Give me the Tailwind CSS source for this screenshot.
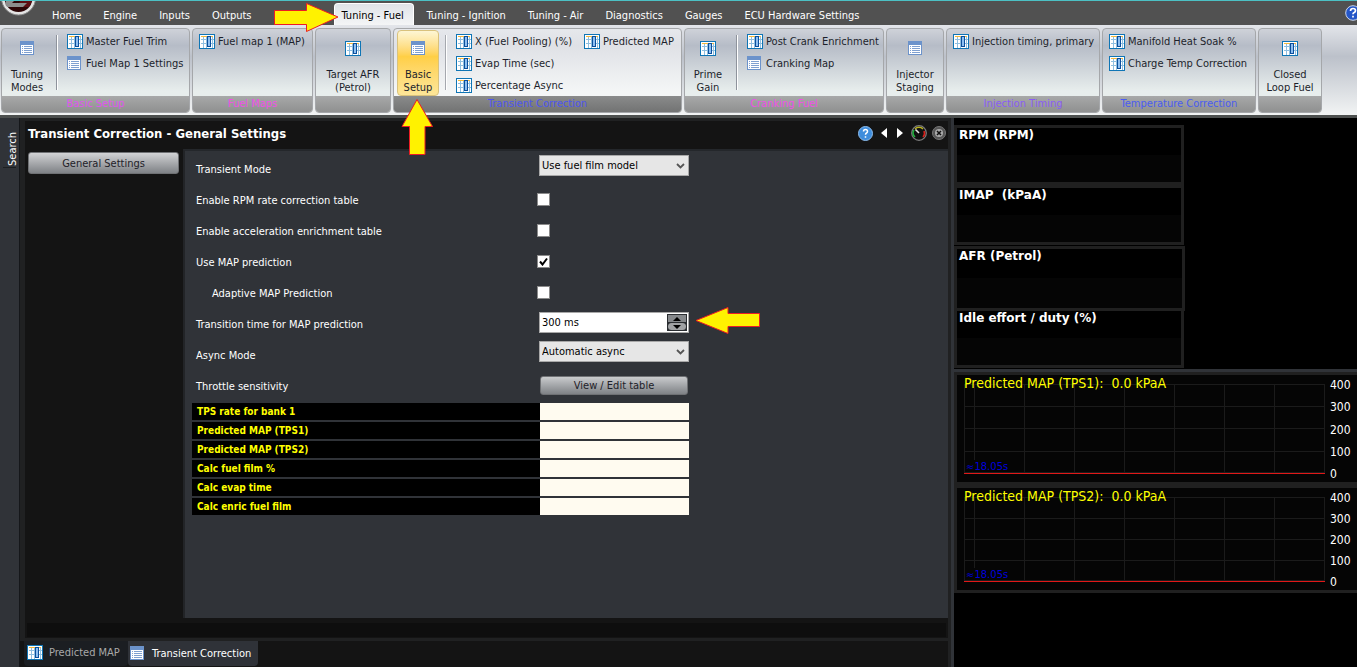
<!DOCTYPE html>
<html lang="en">
<head>
  <meta charset="UTF-8">
  <meta name="viewport" content="width=device-width, initial-scale=1.0">
  <title>Transient Correction - General Settings</title>
  <script src="https://cdn.jsdelivr.net/npm/@tailwindcss/browser@4"></script>
</head>
<body class="h-screen overflow-hidden flex flex-col bg-black font-['DejaVu_Sans_Condensed','DejaVu_Sans',sans-serif] text-[11px] leading-[13px] text-white">

  <!-- shared icons -->
  <svg class="hidden">
    <symbol id="icon-table" viewBox="0 0 16 15">
      <rect x="0.5" y="0.5" width="15" height="14" fill="#fff" stroke="#0f75b5"/>
      <path d="M2 2.500h12" stroke="#f5b93c"/>
      <path d="M2 5.500h6M2 9.500h6M12 5.500h3M12 9.500h3M4.500 3v11M7.500 3v11M13.500 3v11" stroke="#8fbfe0"/>
      <rect x="8.500" y="2.500" width="3" height="10" fill="#8ebff0" stroke="#0b4f9c"/>
    </symbol>
    <symbol id="icon-list" viewBox="0 0 14 14">
      <rect width="14" height="14" fill="#6c93cb"/>
      <rect x="1" y="4" width="12" height="9" fill="#fff"/>
      <path d="M2 5.500h1M4 5.500h8M2 7.500h1M4 7.500h8M2 9.500h1M4 9.500h8M2 11.500h1M4 11.500h8" stroke="#7fa0d0"/>
    </symbol>
  </svg>

  <!-- menu tabs -->
  <header class="relative h-[25px] shrink-0 border-t border-[#4cc0c4] bg-[#515151]">
    <svg class="absolute left-0 top-0 w-[37px] h-[16px]" viewBox="0 0 37 16">
      <circle cx="18.500" cy="-3" r="17" fill="#e4e4e4" stroke="#8a8a8a"/>
      <circle cx="18.500" cy="-3" r="14" fill="#2c0507"/>
      <path d="M20 0h12l-3 6H18z" fill="#5d0d12"/>
      <path d="M6 0h8l-2 2h15l-4 4H8q-4-1-2-6z" fill="#8c8c8c"/>
    </svg>
    <nav class="flex h-full pl-[41px] pt-0.5 whitespace-nowrap [&>a]:px-[11px] [&>a]:pt-[6px]">
      <a href="#">Home</a>
      <a href="#">Engine</a>
      <a href="#">Inputs</a>
      <a href="#">Outputs</a>
      <a href="#" class="w-[71px]">Functions</a>
      <a href="#" class="w-20 !px-[7px] mr-0.5 rounded-t border border-b-0 border-white bg-linear-to-b from-[#dfe3e8] to-[#f4f5f6] text-black !pt-[5px]">Tuning - Fuel</a>
      <a href="#">Tuning - Ignition</a>
      <a href="#">Tuning - Air</a>
      <a href="#">Diagnostics</a>
      <a href="#">Gauges</a>
      <a href="#">ECU Hardware Settings</a>
    </nav>
    <button aria-label="Help" class="absolute -right-1 top-[4px] size-4">
      <svg class="size-4" viewBox="0 0 16 16"><circle cx="8" cy="8" r="7.300" fill="#2456c8" stroke="#c9d6ee"/><path d="M5.500 6q0-2.500 2.500-2.500t2.500 2.200q0 1.200-1.300 1.800T8 9.300M8 10.800v1.700" fill="none" stroke="#fff" stroke-width="1.700"/></svg>
    </button>
  </header>

  <!-- ribbon -->
  <section class="h-[93px] shrink-0 flex gap-0.5 px-px pt-[3px] pb-0.5 border-b-3 border-[#4d504f] bg-linear-to-b from-[#e3e5ea] via-[#bcc1ca] via-35% to-[#f2f4f4] text-[#1c1f2b] whitespace-nowrap
    [&>div]:shrink-0 [&>div]:flex [&>div]:flex-col [&>div]:rounded [&>div]:border [&>div]:border-[#a5a7aa] [&>div]:overflow-hidden [&>div]:bg-linear-to-b [&>div]:from-[#cfd2d9] [&>div]:via-[#b6bcc7] [&>div]:via-20% [&>div]:to-[#e8eeed] [&>div]:to-75%
    [&_footer]:h-[16px] [&_footer]:text-center [&_footer]:leading-[16px] [&_footer]:bg-linear-to-b [&_footer]:from-[#a8a9a9] [&_footer]:to-[#8f9090]">
    <div class="w-[189px]">
      <div class="flex-1 flex">
        <button class="w-[50px] flex flex-col items-center justify-start pt-3"><svg class="size-[14px] mb-[13px]"><use href="#icon-list"/></svg>Tuning<br>Modes</button>
        <div class="w-px my-[6px] ml-1 bg-white border-l border-[#8e939c] box-content"></div>
        <div class="pl-[9px] pt-1 flex flex-col gap-[6px]">
          <button class="flex items-center gap-[3px] h-4"><svg class="w-4 h-[15px]"><use href="#icon-table"/></svg>Master Fuel Trim</button>
          <button class="flex items-center gap-[5px] h-4"><svg class="size-[14px]"><use href="#icon-list"/></svg>Fuel Map 1 Settings</button>
        </div>
      </div>
      <footer class="text-[#e055f0]">Basic Setup</footer>
    </div>
    <div class="w-[121px]">
      <div class="flex-1 pl-[6px] pt-1">
        <button class="flex items-center gap-[3px] h-4"><svg class="w-4 h-[15px]"><use href="#icon-table"/></svg>Fuel map 1 (MAP)</button>
      </div>
      <footer class="text-[#f050e8]">Fuel Maps</footer>
    </div>
    <div class="w-[76px]">
      <button class="flex-1 flex flex-col items-center justify-start pt-3"><svg class="w-4 h-[15px] mb-[12px]"><use href="#icon-table"/></svg>Target AFR<br>(Petrol)</button>
      <footer></footer>
    </div>
    <div class="w-[289px] !from-[#e6e8ec] !via-[#dfe1e6] !to-[#f4f6f6]">
      <div class="flex-1 flex">
        <button class="w-[42px] h-[66px] ml-[3px] mt-px flex flex-col items-center justify-start pt-[10px] rounded-sm border border-[#d9c27c] bg-linear-to-b from-[#fdf6d4] from-0% via-[#ffcf45] via-40% to-[#fde698]"><svg class="size-[14px] mb-[13px]"><use href="#icon-list"/></svg>Basic<br>Setup</button>
        <div class="w-px my-[6px] ml-[6px] bg-white border-l border-[#a5a8ae] box-content"></div>
        <div class="pl-[9px] pt-1 grid grid-cols-[auto_auto] auto-rows-[16px] gap-x-3 gap-y-[6px] content-start">
          <button class="flex items-center gap-[3px]"><svg class="w-4 h-[15px]"><use href="#icon-table"/></svg>X (Fuel Pooling) (%)</button>
          <button class="flex items-center gap-[3px]"><svg class="w-4 h-[15px]"><use href="#icon-table"/></svg>Predicted MAP</button>
          <button class="flex items-center gap-[3px] col-span-2"><svg class="w-4 h-[15px]"><use href="#icon-table"/></svg>Evap Time (sec)</button>
          <button class="flex items-center gap-[3px] col-span-2"><svg class="w-4 h-[15px]"><use href="#icon-table"/></svg>Percentage Async</button>
        </div>
      </div>
      <footer class="!from-[#8a8b8b] !to-[#727373] text-[#4d55f0]">Transient Correction</footer>
    </div>
    <div class="w-[200px]">
      <div class="flex-1 flex">
        <button class="w-[46px] flex flex-col items-center justify-start pt-3"><svg class="w-4 h-[15px] mb-[12px]"><use href="#icon-table"/></svg>Prime<br>Gain</button>
        <div class="w-px my-[6px] ml-[5px] bg-white border-l border-[#8e939c] box-content"></div>
        <div class="pl-[9px] pt-1 flex flex-col gap-[6px]">
          <button class="flex items-center gap-[3px] h-4"><svg class="w-4 h-[15px]"><use href="#icon-table"/></svg>Post Crank Enrichment</button>
          <button class="flex items-center gap-[5px] h-4"><svg class="size-[14px]"><use href="#icon-list"/></svg>Cranking Map</button>
        </div>
      </div>
      <footer class="text-[#f050e8]">Cranking Fuel</footer>
    </div>
    <div class="w-[58px]">
      <button class="flex-1 flex flex-col items-center justify-start pt-3"><svg class="size-[14px] mb-[13px]"><use href="#icon-list"/></svg>Injector<br>Staging</button>
      <footer></footer>
    </div>
    <div class="w-[154px]">
      <div class="flex-1 pl-[6px] pt-1">
        <button class="flex items-center gap-[3px] h-4"><svg class="w-4 h-[15px]"><use href="#icon-table"/></svg>Injection timing, primary</button>
      </div>
      <footer class="text-[#8a5cf5]">Injection Timing</footer>
    </div>
    <div class="w-[154px]">
      <div class="flex-1 pl-[6px] pt-1 flex flex-col gap-[6px]">
        <button class="flex items-center gap-[3px] h-4"><svg class="w-4 h-[15px]"><use href="#icon-table"/></svg>Manifold Heat Soak %</button>
        <button class="flex items-center gap-[3px] h-4"><svg class="w-4 h-[15px]"><use href="#icon-table"/></svg>Charge Temp Correction</button>
      </div>
      <footer class="text-[#4a5cf0]">Temperature Correction</footer>
    </div>
    <div class="w-[64px]">
      <button class="flex-1 flex flex-col items-center justify-start pt-3"><svg class="w-4 h-[15px] mb-[12px]"><use href="#icon-table"/></svg>Closed<br>Loop Fuel</button>
      <footer></footer>
    </div>
  </section>

  <main class="flex-1 min-h-0 flex">
    <aside class="w-5 shrink-0 bg-[#303338] border-r border-[#15171a] pt-[13px]">
      <button class="w-full h-9 flex items-center justify-center pl-[5px]"><span class="[writing-mode:vertical-rl] rotate-180">Search</span></button>
      <div class="mx-[3px] h-px bg-[#1c1f22]"></div>
    </aside>

    <div class="flex-1 min-w-0 flex flex-col bg-[#141414]">
      <div class="flex-1 min-h-0 flex flex-col border-l-5 border-t-3 border-[#202122] bg-[#141414]">
        <div class="h-[28px] shrink-0 flex items-center pl-[3px] pr-0.5">
          <h1 class="flex-1 text-[13px] font-bold leading-4 pb-[3px]">Transient Correction - General Settings</h1>
          <div class="flex items-center pb-1">
            <button aria-label="Help" class="mr-[8px]">
              <svg class="size-[15px]" viewBox="0 0 15 15"><circle cx="7.500" cy="7.500" r="7" fill="#3f8ddc" stroke="#8dbcec"/><path d="M5.500 5.500q0-2 2-2t2 2q0 1-1 1.500t-1 1.800M7.500 10.300v1.500" fill="none" stroke="#fff" stroke-width="1.500"/></svg>
            </button>
            <button aria-label="Previous" class="mr-[10px]"><svg class="w-[6px] h-[10px]" viewBox="0 0 6 10"><path d="M6 0v10L0 5z" fill="#fff"/></svg></button>
            <button aria-label="Next" class="mr-[8px]"><svg class="w-[6px] h-[10px]" viewBox="0 0 6 10"><path d="M0 0v10l6-5z" fill="#fff"/></svg></button>
            <button aria-label="Gauges" class="mr-[5px]">
              <svg class="size-4" viewBox="0 0 16 16"><circle cx="8" cy="8" r="7.300" fill="#111" stroke="#7c7c7c" stroke-width="1.300"/><g fill="none" stroke-width="1.600"><path d="M4 12a5.500 5.500 0 0 1-1-7" stroke="#1fae3c"/><path d="M4 4a5.500 5.500 0 0 1 8 0" stroke="#b9b320"/><path d="M13 6a5.500 5.500 0 0 1-1 6" stroke="#d8201a"/><path d="M4.500 4.500L8 8" stroke="#e8e8e8"/></g></svg>
            </button>
            <button aria-label="Close">
              <svg class="size-[14px]" viewBox="0 0 14 14"><circle cx="7" cy="7" r="6.500" fill="#555" stroke="#777"/><circle cx="7" cy="7" r="4" fill="#aaa"/><path d="M5 5l4 4M9 5l-4 4" stroke="#111" stroke-width="1.500"/></svg>
            </button>
          </div>
        </div>

        <div class="flex-1 min-h-0 flex">
          <div class="w-[158px] shrink-0 pl-[3px] pr-1 pt-[3px]">
            <button class="w-full h-[22px] rounded-[3px] border border-[#6f7174] bg-linear-to-b from-[#d2d3d5] to-[#7f8286] text-[#1e2128]">General Settings</button>
          </div>

          <form class="flex-1 bg-[#303338] border-t-2 border-l-2 border-l-[#222427] border-t-[#24272b] pl-[7px] pt-[2px]">
            <div class="grid grid-cols-[343px_150px] auto-rows-[31px] items-center pl-1 [&_label]:pt-0.5 [&_input[type=checkbox]]:appearance-none [&_input[type=checkbox]]:-ml-0.5 [&_input[type=checkbox]]:size-[13px] [&_input[type=checkbox]]:bg-white [&_input[type=checkbox]]:border [&_input[type=checkbox]]:border-[#8b8b8b]">
              <label for="mode">Transient Mode</label>
              <div class="relative mb-[6px]">
                <select id="mode" class="appearance-none block w-full h-[21px] pl-0.5 border border-[#a8a8a8] bg-[#e6e6e6] text-black"><option>Use fuel film model</option></select>
                <svg class="absolute right-[4px] top-[8px] w-[9px] h-[6px] pointer-events-none" viewBox="0 0 9 6"><path d="M1 1l3.500 3.500L8 1" fill="none" stroke="#555" stroke-width="1.800"/></svg>
              </div>
              <label for="rpm">Enable RPM rate correction table</label>
              <input id="rpm" type="checkbox">
              <label for="accel">Enable acceleration enrichment table</label>
              <input id="accel" type="checkbox">
              <label for="map">Use MAP prediction</label>
              <div class="relative">
                <input id="map" type="checkbox" checked class="block">
                <svg class="absolute left-0 top-0.5 size-[9px] pointer-events-none" viewBox="0 0 9 9"><path d="M1 4.500L3.500 7.500L8 1.500" fill="none" stroke="#000" stroke-width="2"/></svg>
              </div>
              <label for="adaptive" class="pl-4">Adaptive MAP Prediction</label>
              <input id="adaptive" type="checkbox">
              <label for="time">Transition time for MAP prediction</label>
              <div class="h-[21px] mb-0.5 flex items-center border border-[#a8a8a8] bg-white pr-px">
                <input id="time" type="text" value="300 ms" class="flex-1 min-w-0 pl-0.5 text-black">
                <div class="w-5 h-[17px] flex flex-col gap-px p-px bg-[#2a2d31]">
                  <button type="button" aria-label="Increase" class="flex-1 flex items-center justify-center bg-[#85888b]"><svg class="w-2 h-1" viewBox="0 0 8 4"><path d="M4 0l4 4H0z"/></svg></button>
                  <button type="button" aria-label="Decrease" class="flex-1 flex items-center justify-center rounded-sm bg-[#a0a2a4]"><svg class="w-2 h-1" viewBox="0 0 8 4"><path d="M0 0h8L4 4z"/></svg></button>
                </div>
              </div>
              <label for="async">Async Mode</label>
              <div class="relative mb-[6px]">
                <select id="async" class="appearance-none block w-full h-[21px] pl-0.5 border border-[#a8a8a8] bg-[#e6e6e6] text-black"><option>Automatic async</option></select>
                <svg class="absolute right-[4px] top-[8px] w-[9px] h-[6px] pointer-events-none" viewBox="0 0 9 6"><path d="M1 1l3.500 3.500L8 1" fill="none" stroke="#555" stroke-width="1.800"/></svg>
              </div>
              <label for="throttle">Throttle sensitivity</label>
              <button id="throttle" type="button" class="ml-px mr-px h-[19px] rounded-[3px] border border-[#6f7174] bg-linear-to-b from-[#c9cbcd] to-[#7f8286] text-[#1e2128]">View / Edit table</button>
            </div>

            <table class="w-[497px] border-separate border-spacing-x-0 border-spacing-y-0.5 text-[10px] leading-[17px] font-bold text-[#ffff00]">
              <tbody class="[&_th]:h-[17px] [&_th]:p-0 [&_th]:pl-[5px] [&_th]:w-[348px] [&_th]:text-left [&_th]:bg-black [&_td]:bg-[#fffbf0]">
                <tr><th>TPS rate for bank 1</th><td></td></tr>
                <tr><th>Predicted MAP (TPS1)</th><td></td></tr>
                <tr><th>Predicted MAP (TPS2)</th><td></td></tr>
                <tr><th>Calc fuel film %</th><td></td></tr>
                <tr><th>Calc evap time</th><td></td></tr>
                <tr><th>Calc enric fuel film</th><td></td></tr>
              </tbody>
            </table>
          </form>
        </div>
        <div class="h-[14px] mt-[5px] mb-px mx-0.5 shrink-0 bg-[#0e0e0e]"></div>
      </div>

      <div class="h-[29px] shrink-0 flex border-t-3 border-[#202122] pl-1 pb-px">
        <a href="#" class="flex items-center gap-[6px] w-[104px] pl-[3px] pb-[3px] bg-[#1b1e22] text-[#a9a9a9] rounded-b"><svg class="w-4 h-[15px]"><use href="#icon-table"/></svg>Predicted MAP</a>
        <a href="#" class="flex items-center gap-2 w-[130px] pl-0.5 pb-px bg-[#2f3238] rounded-b"><svg class="size-[14px]"><use href="#icon-list"/></svg>Transient Correction</a>
      </div>
    </div>

    <!-- gauges and charts -->
    <aside class="w-[409px] shrink-0 flex flex-col border-l-3 border-[#202122]">
      <div class="flex-1 flex flex-col border-l-3 border-[#303338]">
        <div class="flex flex-col items-start pt-[7px] font-['DejaVu_Sans',sans-serif] text-xs leading-[14px] font-bold whitespace-pre [&>div]:border-3 [&>div]:border-[#202020] [&>div]:w-[230px] [&>div]:h-[60px] [&>div]:pl-0.5 [&>div]:bg-linear-to-b [&>div]:from-black [&>div]:from-50% [&>div]:to-[#050505] [&>div]:to-50%">
          <div>RPM (RPM)</div>
          <div>IMAP  (kPaA)</div>
          <div class="mt-px !w-[231px] !h-[65px]">AFR (Petrol)</div>
          <div class="!h-[57px] !border-t-0">Idle effort / duty (%)</div>
        </div>
        <div class="mt-px h-[3px] bg-[#303338]"></div>

        <section class="relative h-[113px] flex gap-[5px] border-y-3 border-l-3 border-[#202020] bg-[#050505] pl-[7px] pr-[5px]">
          <h2 class="absolute left-[7px] top-px text-sm leading-[15px] text-[#ffff00] whitespace-pre">Predicted MAP (TPS1):  0.0 kPaA</h2>
          <svg class="flex-1 min-w-0 h-[90px] mt-[9px]" viewBox="0 0 361 90" preserveAspectRatio="none" shape-rendering="crispEdges" fill="none">
            <path d="M.5 0v89M10.500 0v76M60.500 0v89M110.500 0v89M160.500 0v89M210.500 0v89M260.500 0v89M310.500 0v89M360.500 0v89M0 .5h361M0 22.500h361M0 44.500h361M0 67.500h361M0 88.500h361" stroke="#1b1b1b"/>
            <path d="M0 89.500h361" stroke="#e01818"/>
          </svg>
          <span class="absolute left-[9px] top-[85px] text-[10px] font-['DejaVu_Sans',sans-serif] text-[#0000dc]">≈18.05s</span>
          <div class="w-[22px] h-[102px] mt-[4px] flex flex-col justify-between text-xs leading-[13px]"><span>400</span><span>300</span><span>200</span><span>100</span><span>0</span></div>
        </section>
        <section class="relative h-[108px] flex gap-[5px] border-y-3 border-l-3 border-[#202020] bg-[#050505] pl-[7px] pr-[5px]">
          <h2 class="absolute left-[7px] top-px text-sm leading-[15px] text-[#ffff00] whitespace-pre">Predicted MAP (TPS2):  0.0 kPaA</h2>
          <svg class="flex-1 min-w-0 h-[85px] mt-[9px]" viewBox="0 0 361 85" preserveAspectRatio="none" shape-rendering="crispEdges" fill="none">
            <path d="M.5 0v84M10.500 0v71M60.500 0v84M110.500 0v84M160.500 0v84M210.500 0v84M260.500 0v84M310.500 0v84M360.500 0v84M0 .5h361M0 21.500h361M0 42.500h361M0 63.500h361M0 83.500h361" stroke="#1b1b1b"/>
            <path d="M0 84.500h361" stroke="#e01818"/>
          </svg>
          <span class="absolute left-[9px] top-[80px] text-[10px] font-['DejaVu_Sans',sans-serif] text-[#0000dc]">≈18.05s</span>
          <div class="w-[22px] h-[97px] mt-[4px] flex flex-col justify-between text-xs leading-[13px]"><span>400</span><span>300</span><span>200</span><span>100</span><span>0</span></div>
        </section>
      </div>
    </aside>
  </main>

  <!-- callout arrows -->
  <svg class="absolute left-[273px] top-[2px] w-[66px] h-[31px]" viewBox="0 0 66 31"><path d="M1.500 8.500h32v-7L65 15l-31.500 14.500v-7h-32z" fill="#fff200" stroke="#ed1c24"/></svg>
  <svg class="absolute left-[401px] top-[98px] w-[33px] h-[58px]" viewBox="0 0 33 58"><path d="M16 1.500l15.500 27h-7.500v28H8.500v-28H1z" fill="#fff200" stroke="#ed1c24"/></svg>
  <svg class="absolute left-[695px] top-[306px] w-[66px] h-[29px]" viewBox="0 0 66 29"><path d="M1 14.500l32-13v6h31.500v13H33v7z" fill="#fff200" stroke="#ed1c24"/></svg>
</body>
</html>
